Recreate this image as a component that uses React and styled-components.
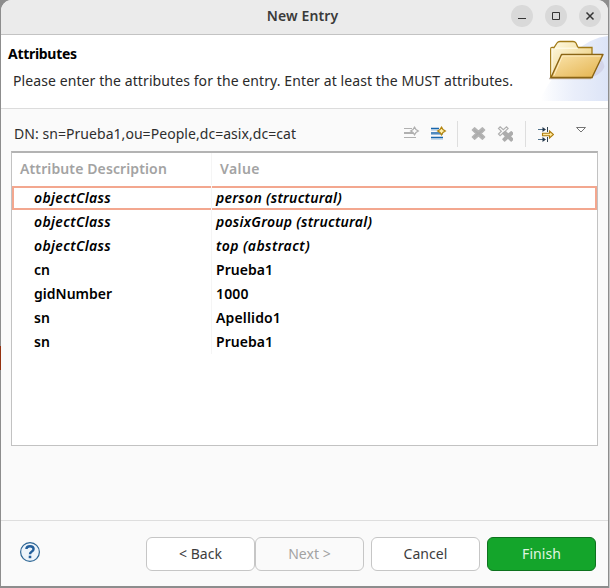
import React from "react";
import styled, { createGlobalStyle } from "styled-components";

const GlobalStyle = createGlobalStyle`
  * { box-sizing: border-box; }
  body {
    margin: 0;
    overflow: hidden;
    background: #c9c9c9;
    font: 14px/20px "Noto Sans", "Open Sans", sans-serif;
    color: #2e2e2e;
  }
  svg { display: block; flex: none; }
`;

const Desktop = styled.div`
  height: 588px;
  padding: 0 1px 2px 1px;
  border-right: 1px solid #c6c6c6;
  background:
    linear-gradient(#8d8d8d, #8d8d8d) right / 4px 100% no-repeat,
    linear-gradient(to bottom, #8d8d8d 0 346px, #94310f 346px 370px, #8d8d8d 370px);
`;

const Window = styled.main`
  height: 586px;
  display: flex;
  flex-direction: column;
  overflow: hidden;
  border-radius: 11px 11px 0 0;
  background: #fafafa;
`;

const TitleBar = styled.header`
  height: 35px;
  display: grid;
  grid-template-columns: 1fr auto 1fr;
  align-items: center;
  padding: 0 7px 3px 0;
  background: #ebebeb;
  border-bottom: 1px solid #c3c3c3;
`;

const Label = styled.span`
  white-space: pre;
  letter-spacing: ${({ $track = 0 }) => $track}px;
`;

const WindowTitle = styled(Label)`
  grid-column: 2;
  padding-left: 3px;
  font-weight: 600;
  color: #3a3a3a;
`;

const WindowControls = styled.div`
  justify-self: end;
  display: flex;
  gap: 12px;
`;

const RoundButton = styled.button`
  width: 22px;
  height: 22px;
  padding: 0;
  border: 0;
  border-radius: 50%;
  background: #d9d9d9;
`;

const Banner = styled.section`
  height: 74px;
  display: flex;
  justify-content: space-between;
  background: #fff;
  border-bottom: 1px solid #dcdcdc;
`;

const BannerText = styled.div`
  padding: 9px 0 0 7px;
  display: flex;
  flex-direction: column;
  gap: 7px;
  color: #2a2a2a;
`;

const BannerTitle = styled(Label)`
  font-weight: 700;
  color: #000;
`;

const BannerMessage = styled(Label)`
  padding-left: 5px;
`;

const Content = styled.section`
  flex: 1;
  padding: 9px 10px 0;
`;

const EntryBar = styled.div`
  height: 33px;
  display: flex;
  align-items: center;
  justify-content: space-between;
  padding: 0 0 1px 3px;
`;

const Toolbar = styled.div`
  display: flex;
  align-items: center;
  height: 26px;
`;

const ToolButton = styled.button`
  width: ${({ $width }) => $width}px;
  height: 26px;
  padding: 0;
  border: 0;
  background: none;
`;

const Divider = styled.span`
  width: 1px;
  height: 26px;
  background: #dedede;
`;

const Table = styled.div`
  height: 295px;
  background: #fff;
  border: 1px solid #c2c2c2;
  border-top: 2px solid #b3b3b3;
`;

const TableRow = styled.div`
  height: 24px;
  display: grid;
  grid-template-columns: 200px 1fr;
  font-weight: 600;
  font-style: ${({ $italic }) => ($italic ? "italic" : "normal")};
  color: #000;
`;

const SelectedRow = styled(TableRow)`
  box-shadow: inset 0 0 0 2px #f3a78f;
`;

const HeadRow = styled(TableRow)`
  height: 33px;
  padding-bottom: 1px;
  color: #a3a3a3;
`;

const Cell = styled.div`
  display: flex;
  align-items: center;
  padding-left: ${({ $indent }) => $indent}px;
  &:first-child { border-right: 1px solid #f5f5f5; }
`;

const Footer = styled.footer`
  height: 66px;
  display: flex;
  align-items: center;
  padding: 1px 12px 0 18px;
  border-top: 1px solid #dedede;
`;

const HelpButton = styled.button`
  width: 22px;
  height: 22px;
  padding: 0;
  margin: -5px auto 0 0;
  border: 0;
  background: none;
`;

const Button = styled.button`
  width: 109px;
  height: 34px;
  margin-left: ${({ $gap = 0 }) => $gap}px;
  padding: 0;
  font: inherit;
  letter-spacing: 0.05px;
  color: #3d3d3d;
  background: #fff;
  border: 1px solid #c6c6c6;
  border-radius: 6px;
`;

const InactiveButton = styled(Button)`
  color: #a2a2a2;
  background: #fafafa;
`;

const PrimaryButton = styled(Button)`
  color: #e0f5e2;
  background: #14a52b;
  border-color: #0d721e;
`;

const FolderArt = () => (
  <svg width="67" height="73" viewBox="0 0 67 73">
    <defs>
      <linearGradient id="skyX" x1="0" x2="1">
        <stop offset="0" stopColor="#dfe7f8" stopOpacity="0" />
        <stop offset="0.5" stopColor="#e4eaf9" stopOpacity="0.8" />
        <stop offset="1" stopColor="#dce4f7" />
      </linearGradient>
      <linearGradient id="folderBack" x1="0" y1="0" x2="1" y2="1">
        <stop offset="0" stopColor="#fffbe5" />
        <stop offset="1" stopColor="#e9c76e" />
      </linearGradient>
      <linearGradient id="folderFront" x1="0" y1="0" x2="1" y2="1">
        <stop offset="0" stopColor="#fbe5ae" />
        <stop offset="1" stopColor="#e3b24c" />
      </linearGradient>
    </defs>
    <path d="M0 66V62Q32 4 67 1V66Z" fill="url(#skyX)" />
    <path d="M51 42L60 24Q66 31 61 36T51 42Z" fill="#c9c8df" opacity=".6" />
    <path d="M8 43.500H50" stroke="#c4b8ae" strokeWidth="1.500" />
    <g transform="translate(1 0)">
      <path d="M8.700 42.500V14Q8.700 12.500 10 12.500H12L15 8Q16 6.500 18 6.500H31Q33 6.500 34 8L36 12.500H50V42.500Z" fill="url(#folderBack)" stroke="#a27b18" strokeWidth="1.300" />
      <path d="M10 13V40M13 13.200H36" stroke="#fffdf0" />
      <path d="M9 42.500L19.500 19.500H61L50 42.500Z" fill="url(#folderFront)" stroke="#8a6414" strokeWidth="1.400" strokeLinejoin="round" />
      <path d="M12 40.500L20.500 21H59" fill="none" stroke="#ffedc0" />
    </g>
  </svg>
);

const Sparkle = ({ color, fill }) => (
  <path
    d="M10.500 .2L12 2.500L14.300 4L12 5.500L10.500 7.800L9 5.500L6.700 4L9 2.500Z"
    fill={fill}
    stroke={color}
    strokeWidth="1.300"
  />
);

const AddValueIcon = () => (
  <svg width="27" height="26" viewBox="-6 -6 27 26">
    <path d="M0 1.500H8M0 10.500H12" stroke="#b0b0b0" />
    <path d="M0 6H12" stroke="#b0b0b0" strokeWidth="2" />
    <Sparkle color="#b0b0b0" fill="#fafafa" />
  </svg>
);

const AddAttributeIcon = () => (
  <svg width="27" height="26" viewBox="-6 -6 27 26">
    <path d="M0 1.500H8M0 6H12M0 10.500H12" stroke="#1866ad" strokeWidth="1.500" />
    <path d="M0 3H7M0 7.500H12M0 12H12" stroke="#99bddd" strokeWidth="1.100" />
    <Sparkle color="#b48611" fill="#fff0ae" />
  </svg>
);

const CROSS = "M2 1L6 4.500L10 1L12 3L8.500 6.500L12 10L10 12L6 8.500L2 12L0 10L3.500 6.500L0 3Z";

const DeleteIcon = () => (
  <svg width="28" height="26" viewBox="-14.500 -6 28 26">
    <path d={CROSS} fill="#acacac" stroke="#b4b4b4" strokeWidth="1.700" strokeLinejoin="round" />
  </svg>
);

const DeleteAllIcon = () => (
  <svg width="27" height="26" viewBox="-12.500 -5 27 26">
    <path transform="scale(.8)" d={CROSS} fill="#fafafa" stroke="#b0b0b0" strokeWidth="1.500" />
    <path transform="translate(4.500 5) scale(.82)" d={CROSS} fill="#acacac" stroke="#acacac" strokeWidth="1.900" strokeLinejoin="round" />
  </svg>
);

const FilterIcon = () => (
  <svg width="28" height="26" viewBox="-12 -6 28 26">
    <path d="M0 2.500H7M0 12.500H7" stroke="#50718b" strokeWidth="1.200" />
    <path d="M4.500 0L8 2.500L4.500 5ZM4.500 10L8 12.500L4.500 15Z" fill="#26394c" />
    <path d="M9.500 0V5M9.500 10V15" stroke="#34444f" />
    <path d="M4.500 6.300H11.500V4L15.500 7.500L11.500 11V8.700H4.500Z" fill="#ffe99f" stroke="#ad7b0c" strokeWidth="1.100" />
  </svg>
);

const MenuIcon = () => (
  <svg width="44" height="26" viewBox="-22 -6 44 26">
    <path d="M.5 .5H9.500L5 5Z" fill="#fff" stroke="#747474" />
  </svg>
);

const HelpIcon = () => (
  <svg width="22" height="22" viewBox="0 0 22 22">
    <circle cx="11" cy="11" r="9.400" fill="#edf4fa" stroke="#2c6594" strokeWidth="1.200" />
    <path d="M7.400 8Q7.500 5.200 11 5.200T14.600 8Q14.600 9.600 12.600 10.700Q11 11.600 11 13.200" fill="none" stroke="#245f9b" strokeWidth="2.400" />
    <path d="M9.700 14.700H12.300V17.200H9.700Z" fill="#245f9b" />
  </svg>
);

const CONTROL_PATHS = {
  Minimize: "M7 13.500H15",
  Maximize: "M7.500 7.500H14.500V14.500H7.500Z",
  Close: "M7.500 7.500L14.500 14.500M14.500 7.500L7.500 14.500",
};

const ROWS = [
  { name: "objectClass", value: "person (structural)", italic: true, tracks: [0.36, 0.28], selected: true },
  { name: "objectClass", value: "posixGroup (structural)", italic: true, tracks: [0.36, 0.27] },
  { name: "objectClass", value: "top (abstract)", italic: true, tracks: [0.36, 0.41] },
  { name: "cn", value: "Prueba1", tracks: [0, 0.033] },
  { name: "gidNumber", value: "1000", tracks: [0.02, 0.15] },
  { name: "sn", value: "Apellido1", tracks: [0, 0.15] },
  { name: "sn", value: "Prueba1", tracks: [0, 0.033] },
];

export default function App() {
  return (
    <>
      <GlobalStyle />
      <Desktop>
        <Window>
          <TitleBar>
            <WindowTitle $track={0.12}>New Entry</WindowTitle>
            <WindowControls>
              {Object.entries(CONTROL_PATHS).map(([name, d]) => (
                <RoundButton key={name} aria-label={name}>
                  <svg width="22" height="22">
                    <path d={d} fill="none" stroke="#353535" strokeWidth={name === "Close" ? 1.5 : 1} />
                  </svg>
                </RoundButton>
              ))}
            </WindowControls>
          </TitleBar>
          <Banner>
            <BannerText>
              <BannerTitle $track={-0.3}>Attributes</BannerTitle>
              <BannerMessage $track={0.091}>
                Please enter the attributes for the entry. Enter at least the MUST attributes.
              </BannerMessage>
            </BannerText>
            <FolderArt />
          </Banner>
          <Content>
            <EntryBar>
              <Label $track={0.05}>DN: sn=Prueba1,ou=People,dc=asix,dc=cat</Label>
              <Toolbar>
                <ToolButton $width={27} aria-label="New value"><AddValueIcon /></ToolButton>
                <ToolButton $width={32} aria-label="New attribute"><AddAttributeIcon /></ToolButton>
                <Divider />
                <ToolButton $width={28} aria-label="Delete"><DeleteIcon /></ToolButton>
                <ToolButton $width={39} aria-label="Delete all"><DeleteAllIcon /></ToolButton>
                <Divider />
                <ToolButton $width={28} aria-label="Filter"><FilterIcon /></ToolButton>
                <ToolButton $width={44} aria-label="Menu"><MenuIcon /></ToolButton>
              </Toolbar>
            </EntryBar>
            <Table>
              <HeadRow>
                <Cell $indent={8}><Label $track={0.12}>Attribute Description</Label></Cell>
                <Cell $indent={8}><Label $track={0.434}>Value</Label></Cell>
              </HeadRow>
              {ROWS.map(({ name, value, italic, tracks, selected }, i) => {
                const Row = selected ? SelectedRow : TableRow;
                return (
                  <Row key={i} $italic={italic}>
                    <Cell $indent={22}><Label $track={tracks[0]}>{name}</Label></Cell>
                    <Cell $indent={4}><Label $track={tracks[1]}>{value}</Label></Cell>
                  </Row>
                );
              })}
            </Table>
          </Content>
          <Footer>
            <HelpButton aria-label="Help"><HelpIcon /></HelpButton>
            <Button>&lt; Back</Button>
            <InactiveButton>Next &gt;</InactiveButton>
            <Button $gap={7}>Cancel</Button>
            <PrimaryButton $gap={7}>Finish</PrimaryButton>
          </Footer>
        </Window>
      </Desktop>
    </>
  );
}
